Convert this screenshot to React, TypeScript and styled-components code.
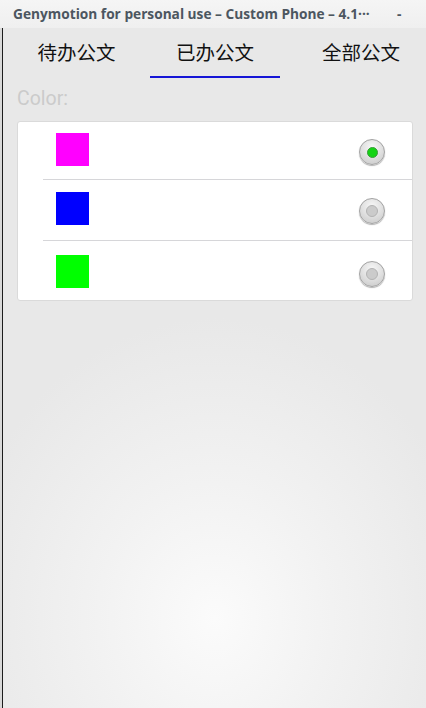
import React from "react";
import styled, { createGlobalStyle } from "styled-components";

const Global = createGlobalStyle`
  html, body { margin: 0; padding: 0; width: 426px; height: 708px; overflow: hidden; }
  #root { width: 426px; height: 708px; }
`;

const Window = styled.div`
  width: 426px;
  height: 708px;
  display: flex;
  flex-direction: column;
  background: #e8e8e8;
`;

const TitleBar = styled.div`
  height: 28px;
  flex: none;
  display: flex;
  align-items: center;
  padding: 0 0 2px 13px;
  box-sizing: border-box;
  background: linear-gradient(#f5f5f5, #efefef);
  font-family: "Open Sans", "DejaVu Sans", sans-serif;
  font-weight: 700;
  font-size: 13.7px;
  color: #4c5660;
  white-space: nowrap;
`;

const TitleText = styled.span`
  flex: 1;
`;

const Minimize = styled.span`
  width: 29px;
  text-align: left;
`;

const Body = styled.div`
  flex: 1;
  display: flex;
`;

const Edge = styled.div`
  width: 3px;
  flex: none;
  background: linear-gradient(to right, #d8d8d8 0 2px, #1c1c1c 2px 3px);
`;

const Screen = styled.div`
  flex: 1;
  display: flex;
  flex-direction: column;
  background: radial-gradient(ellipse 260px 300px at 212px 590px, #fbfbfb 0%, #f2f2f2 45%, #e8e8e8 100%);
`;

const Tabs = styled.div`
  display: grid;
  grid-template-columns: 147px 130px 1fr;
  height: 52px;
`;

const Tab = styled.div<{ $active?: boolean; $end?: boolean }>`
  position: relative;
  display: flex;
  justify-content: ${(p) => (p.$end ? "flex-end" : "center")};
  padding: 11px ${(p) => (p.$end ? "26px" : "0")} 0 0;
  box-sizing: border-box;
  font-family: "Noto Sans CJK SC", sans-serif;
  font-size: 19.5px;
  line-height: 26px;
  color: #111;
  &::after {
    content: "";
    display: ${(p) => (p.$active ? "block" : "none")};
    position: absolute;
    left: 0;
    right: 0;
    bottom: 2px;
    height: 2px;
    background: #1515d6;
  }
`;

const Content = styled.div`
  padding: 7px 13px 0 14px;
  display: flex;
  flex-direction: column;
`;

const Label = styled.div`
  font-family: Roboto, "Liberation Sans", sans-serif;
  font-size: 19.5px;
  line-height: 24px;
  color: #cbcbcb;
  margin-bottom: 10px;
`;

const Card = styled.div`
  background: #fff;
  border: 1px solid #dadada;
  border-radius: 3px;
  display: flex;
  flex-direction: column;
`;

const Row = styled.div<{ $h: number; $top: number; $divider?: boolean }>`
  height: ${(p) => p.$h}px;
  margin-left: 25px;
  display: flex;
  align-items: flex-start;
  padding: ${(p) => p.$top}px 27px 0 13px;
  box-sizing: border-box;
  border-bottom: ${(p) => (p.$divider ? "1px solid #d6d6d9" : "none")};
`;

const Swatch = styled.div<{ $c: string }>`
  width: 33px;
  height: 33px;
  background: ${(p) => p.$c};
`;

const Spacer = styled.div`
  flex: 1;
`;

const Radio = styled.div<{ $on?: boolean }>`
  width: 26px;
  height: 26px;
  margin-top: 6px;
  border-radius: 50%;
  box-sizing: border-box;
  border: 1px solid #a2a2a2;
  background: radial-gradient(circle at 50% 30%, #f7f7f7 0%, #e0e0e0 50%, #c6c6c6 100%);
  box-shadow: 0 1px 1px rgba(0, 0, 0, 0.3);
  display: flex;
  align-items: center;
  justify-content: center;
  &::after {
    content: "";
    width: ${(p) => (p.$on ? 11 : 12)}px;
    height: ${(p) => (p.$on ? 11 : 12)}px;
    border-radius: 50%;
    box-sizing: border-box;
    background: ${(p) => (p.$on ? "#14d414" : "#cbcbcb")};
    border: 1px solid ${(p) => (p.$on ? "#3a9a3a" : "#b3b3b3")};
  }
`;

const rows = [
  { c: "#ff00ff", on: true, h: 58, top: 11 },
  { c: "#0000ff", on: false, h: 61, top: 12 },
  { c: "#00ff00", on: false, h: 59, top: 14 },
];

export default function App() {
  return (
    <>
      <Global />
      <Window>
        <TitleBar>
          <TitleText>Genymotion for personal use – Custom Phone – 4.1···</TitleText>
          <Minimize>-</Minimize>
        </TitleBar>
        <Body>
          <Edge />
          <Screen>
            <Tabs>
              <Tab>待办公文</Tab>
              <Tab $active>已办公文</Tab>
              <Tab $end>全部公文</Tab>
            </Tabs>
            <Content>
              <Label>Color:</Label>
              <Card>
                {rows.map((r, i) => (
                  <Row key={i} $h={r.h} $top={r.top} $divider={i < rows.length - 1}>
                    <Swatch $c={r.c} />
                    <Spacer />
                    <Radio $on={r.on} />
                  </Row>
                ))}
              </Card>
            </Content>
          </Screen>
        </Body>
      </Window>
    </>
  );
}
